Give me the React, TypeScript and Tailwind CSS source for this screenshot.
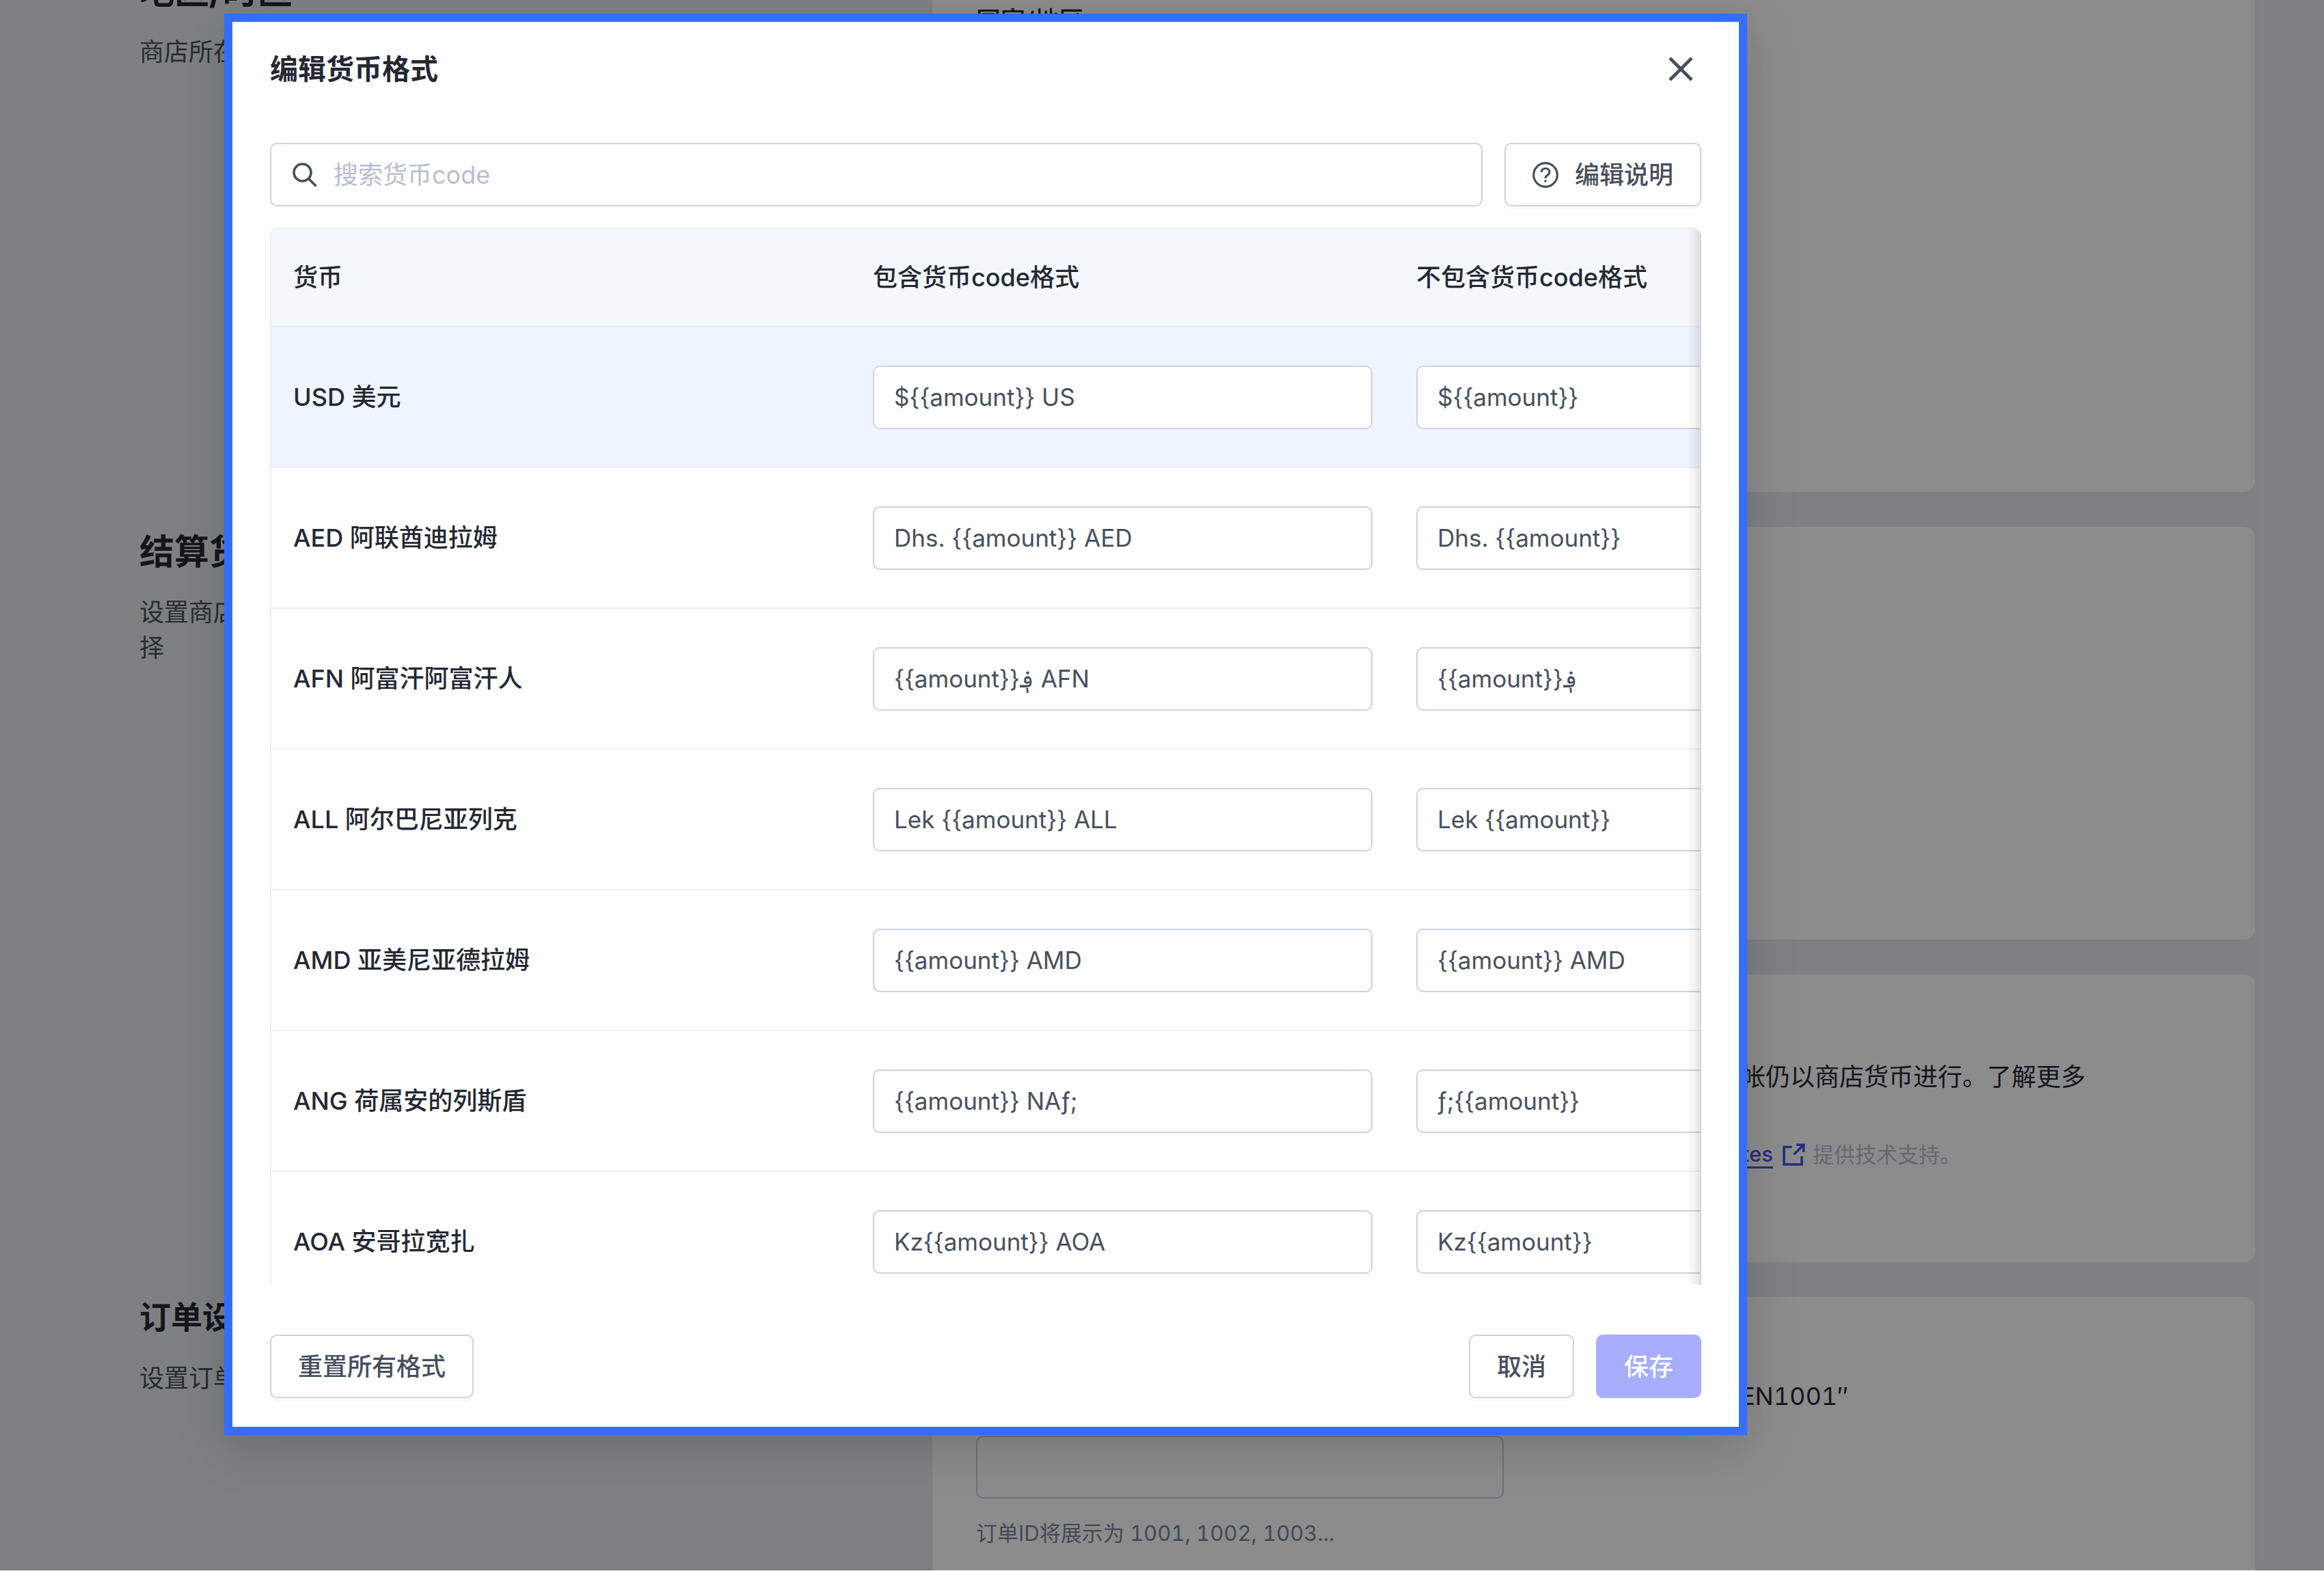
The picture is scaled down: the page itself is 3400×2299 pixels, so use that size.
import React from "react";

type Currency = { name: string; withCode: string; withoutCode: string; active?: boolean };

const currencies: Currency[] = [
  { name: "USD 美元", withCode: "${{amount}} US", withoutCode: "${{amount}}", active: true },
  { name: "AED 阿联酋迪拉姆", withCode: "Dhs. {{amount}} AED", withoutCode: "Dhs. {{amount}}" },
  { name: "AFN 阿富汗阿富汗人", withCode: "{{amount}}؋ AFN", withoutCode: "{{amount}}؋" },
  { name: "ALL 阿尔巴尼亚列克", withCode: "Lek {{amount}} ALL", withoutCode: "Lek {{amount}}" },
  { name: "AMD 亚美尼亚德拉姆", withCode: "{{amount}} AMD", withoutCode: "{{amount}} AMD" },
  { name: "ANG 荷属安的列斯盾", withCode: "{{amount}} NAƒ;", withoutCode: "ƒ;{{amount}}" },
  { name: "AOA 安哥拉宽扎", withCode: "Kz{{amount}} AOA", withoutCode: "Kz{{amount}}" },
];

function SearchIcon() {
  return (
    <svg viewBox="0 0 36 36" className="size-9 shrink-0" fill="none" stroke="#474f5e" strokeWidth="3.6" aria-hidden="true">
      <circle cx="14.5" cy="14.5" r="12.5" />
      <path d="M23.5 23.5 34.5 34.5" />
    </svg>
  );
}

function CloseIcon() {
  return (
    <svg viewBox="0 0 36 36" className="size-9" fill="none" stroke="#474f5e" strokeWidth="4.6" aria-hidden="true">
      <path d="M2 2 34 34M34 2 2 34" />
    </svg>
  );
}

function HelpIcon() {
  return (
    <svg viewBox="0 0 36 36" className="size-[38px] shrink-0" fill="none" stroke="#474f5e" strokeWidth="3" aria-hidden="true">
      <circle cx="18" cy="18" r="16.4" />
      <path d="M12.4 14.2C12.4 11 14.8 9 18 9s5.6 2 5.6 4.8c0 2.6-1.5 3.7-3.2 4.8C18.7 19.7 18 20.6 18 22.8" />
      <path d="M18 25v3" />
    </svg>
  );
}

function ExternalIcon() {
  return (
    <svg viewBox="0 0 36 36" className="size-9 shrink-0" fill="none" stroke="#4350e6" strokeWidth="3.6" aria-hidden="true">
      <path d="M15.5 6.5H4V32h26V20" />
      <path d="M18.5 17.5 32 4M22 3.3H32.7V14" />
    </svg>
  );
}

const outlineButton =
  "flex h-[93px] items-center justify-center gap-6 rounded-[10px] border-2 border-[#cdd1e2] bg-white px-[39px] font-medium text-[#474f5e] shadow-[0_5px_0_rgba(0,0,0,0.02)]";

function Section({
  title,
  titleClass = "text-[51px] leading-[72px] mb-[26px]",
  note,
  cardClass,
  children,
}: {
  title: string;
  titleClass?: string;
  note: React.ReactNode;
  cardClass: string;
  children?: React.ReactNode;
}) {
  return (
    <section className="flex items-start">
      <div className="w-[1160px] shrink-0 pt-px">
        <h2 className={`${titleClass} font-bold text-[#242833]`}>{title}</h2>
        <p className="leading-[52px] text-[#474f5e]">{note}</p>
      </div>
      <div className={`${cardClass} min-w-0 flex-1 rounded-2xl bg-white`}>{children}</div>
    </section>
  );
}

function SettingsPage() {
  return (
    <main className="-mt-[49px] flex flex-col gap-[51px] pr-[101px] pl-[204px]">
      <Section title="地区/时区" note="商店所在" cardClass="min-h-[769px] px-16 pt-[53px]">
        <p className="leading-[52px] font-medium text-[#242833]">国家/地区</p>
      </Section>
      <Section
        title="结算货币"
        note={
          <>
            设置商店
            <br />择
          </>
        }
        cardClass="min-h-[604px]"
      />
      <Section title="" note="" cardClass="min-h-[421px] pt-[124px]">
        <p className="pr-[248px] text-right leading-[52px] text-[#242833]">帐仍以商店货币进行。了解更多</p>
        <p className="mt-[62px] flex items-center justify-end pr-[430px] text-[31px] leading-[52px] text-[#b8bdd0]">
          <a href="#rates" className="border-b-3 border-[#4350e6] leading-9 font-medium text-[#4350e6]">
            Rates
          </a>
          <span className="mr-2.5 ml-3">
            <ExternalIcon />
          </span>
          提供技术支持。
        </p>
      </Section>
      <Section
        title="订单设置"
        titleClass="text-[46px] leading-[56px] mb-9"
        note="设置订单"
        cardClass="min-h-[480px] px-16 pt-[119px]"
      >
        <p className="pr-[531px] text-right leading-[52px] text-[#242833] tabular-nums">EN1001″</p>
        <input
          aria-label="后缀"
          className="mt-8 block h-[92px] w-[772px] rounded-[10px] border-2 border-[#c8cce0] bg-transparent px-8"
        />
        <p className="mt-[25px] text-[31px] leading-[52px] text-[#7a8499] tabular-nums">
          订单ID将展示为 1001, 1002, 1003...
        </p>
      </Section>
    </main>
  );
}

function FormatInput({ label, value }: { label: string; value: string }) {
  return (
    <input
      aria-label={label}
      defaultValue={value}
      className="block h-[93px] w-full rounded-[10px] border-2 border-[#cdd1e2] bg-white px-[29px] text-[35px] text-[#474f5e]"
    />
  );
}

function CurrencyTable() {
  return (
    <div className="relative mt-[31px] h-[1547px] overflow-hidden rounded-t-xl border-t-2 border-l-2 border-[#ebeef5]">
      <table className="w-[2438px] table-fixed border-collapse text-left font-medium text-[#242833]">
        <colgroup>
          <col className="w-[848px]" />
          <col className="w-[795px]" />
          <col className="w-[795px]" />
        </colgroup>
        <thead>
          <tr className="h-[143px] border-b-2 border-[#ebeef5] bg-[#f4f7fb]">
            <th className="px-8 font-medium">货币</th>
            <th className="px-8 font-medium">包含货币code格式</th>
            <th className="px-8 font-medium">不包含货币code格式</th>
          </tr>
        </thead>
        <tbody>
          {currencies.map((c) => (
            <tr
              key={c.name}
              className={c.active ? "h-[206px] border-b-2 border-[#ebeef5] bg-[#eef5ff]" : "h-[206px] border-b-2 border-[#ebeef5]"}
            >
              <td className="px-8">{c.name}</td>
              <td className="px-8 font-normal">
                <FormatInput label={`${c.name} 包含货币code格式`} value={c.withCode} />
              </td>
              <td className="px-8 font-normal">
                <FormatInput label={`${c.name} 不包含货币code格式`} value={c.withoutCode} />
              </td>
            </tr>
          ))}
        </tbody>
      </table>
      <div className="pointer-events-none absolute inset-y-0 right-0 w-5 border-r-2 border-[#d6d8dd] bg-linear-to-l from-black/10 to-transparent" />
    </div>
  );
}

function CurrencyDialog() {
  return (
    <div
      role="dialog"
      aria-labelledby="dialog-title"
      className="mt-5 mr-[844px] ml-[328px] min-w-0 flex-1 border-[12px] border-[#356dff] bg-white px-[55px] pb-[42px] shadow-[0_20px_70px_rgba(0,0,0,0.16)]"
    >
      <header className="flex h-[177px] items-start justify-between pt-[41px]">
        <h1 id="dialog-title" className="text-[41px] leading-[56px] font-semibold text-[#242833]">
          编辑货币格式
        </h1>
        <button type="button" aria-label="关闭" className="mt-2.5 mr-3">
          <CloseIcon />
        </button>
      </header>
      <div className="flex gap-8">
        <label className="flex h-[93px] min-w-0 flex-1 items-center gap-6 rounded-[10px] border-2 border-[#cdd1e2] px-[31px]">
          <SearchIcon />
          <input
            aria-label="搜索货币code"
            placeholder="搜索货币code"
            className="min-w-0 flex-1 bg-transparent outline-none placeholder:text-[#b8bdd0]"
          />
        </label>
        <button type="button" className={outlineButton}>
          <HelpIcon />
          编辑说明
        </button>
      </div>
      <CurrencyTable />
      <footer className="mt-[73px] flex gap-8">
        <button type="button" className={`${outlineButton} mr-auto`}>
          重置所有格式
        </button>
        <button type="button" className={outlineButton}>
          取消
        </button>
        <button type="button" disabled className="h-[93px] rounded-[10px] bg-[#a8adfc] px-[41px] font-medium text-white">
          保存
        </button>
      </footer>
    </div>
  );
}

export default function App() {
  return (
    <div
      lang="zh-CN"
      className="relative h-screen overflow-hidden bg-[#e7eaed] font-['Inter','Noto_Sans_CJK_SC',sans-serif] text-[36px] leading-[52px]"
    >
      <SettingsPage />
      <div className="absolute inset-x-0 top-0 bottom-px flex items-start bg-black/45">
        <CurrencyDialog />
      </div>
    </div>
  );
}
